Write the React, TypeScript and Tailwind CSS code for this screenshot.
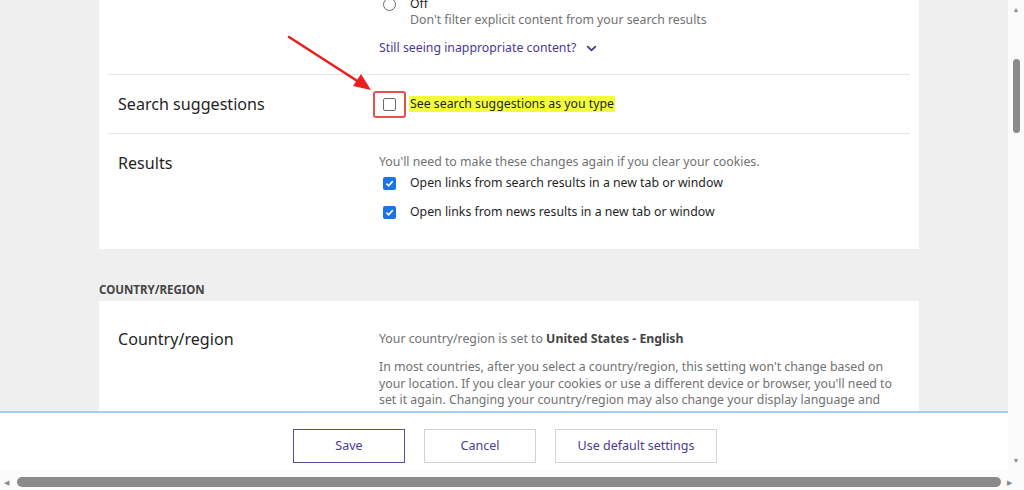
import { ChevronDown } from 'lucide-react';

const font = { fontFamily: '"Noto Sans", "Open Sans", Arial, sans-serif' };

const Check = ({ checked }: { checked: boolean }) =>
  checked ? (
    <span className="flex h-[13px] w-[13px] shrink-0 items-center justify-center rounded-[2px] bg-[#1a73e8]">
      <svg width="9" height="9" viewBox="0 0 10 10">
        <path d="M1.5 5.2 L4 7.6 L8.6 2.4" fill="none" stroke="#fff" strokeWidth="1.8" />
      </svg>
    </span>
  ) : (
    <span className="block h-[13px] w-[13px] shrink-0 rounded-[2px] border border-[#6b6b6b] bg-white" />
  );

const Row = ({ label, children, className }: { label?: string; children: React.ReactNode; className?: string }) => (
  <div className={'flex px-[10px] ' + (className ?? '')}>
    <div className="w-[261px] shrink-0 text-[16.1px] leading-[24px] text-[#1f1f1f]">{label}</div>
    <div className="flex-1">{children}</div>
  </div>
);

export default function App() {
  return (
    <div className="flex h-[490px] w-[1024px] flex-col overflow-hidden bg-white text-[12.3px]" style={font}>
      <div className="flex min-h-0 flex-1">
        <div className="flex min-w-0 flex-1 flex-col">
          {/* scrolled settings page */}
          <div className="relative min-h-0 flex-1 overflow-hidden bg-[#efefef]">
            <div className="-mt-[5px] pl-[99px]">
              <div className="w-[820px] bg-white px-[9px]">
                <Row className="pb-[18px]">
                  <div className="flex h-[18px] items-center">
                    <span className="ml-[4px] h-[13px] w-[13px] rounded-full border border-[#6b6b6b]" />
                    <span className="ml-[14px] text-[#1f1f1f]">Off</span>
                  </div>
                  <div className="-mt-[1px] pl-[31px] leading-[16px] text-[#717171]">
                    Don't filter explicit content from your search results
                  </div>
                  <div className="mt-[12px] flex items-center gap-[8px] leading-[16px] text-[#4c3a8e]">
                    Still seeing inappropriate content?
                    <ChevronDown size={15} strokeWidth={3} />
                  </div>
                </Row>
                <Row label="Search suggestions" className="h-[59px] items-center border-t border-[#e6e6e6]">
                  <div className="flex items-center">
                    <span className="relative ml-[4px]">
                      <Check checked={false} />
                      <span className="absolute -left-[10px] -top-[7px] h-[27px] w-[33px] rounded-[3px] border-2 border-[#e35050]" />
                    </span>
                    <span className="ml-[13px] bg-[#f4ff3c] px-[1px] leading-[16px] text-[#1f1f1f]">
                      See search suggestions as you type
                    </span>
                  </div>
                </Row>
                <Row label="Results" className="border-t border-[#e6e6e6] pb-[29px] pt-[17px]">
                  <div className="pt-[3px] leading-[16px] text-[#717171]">
                    You'll need to make these changes again if you clear your cookies.
                  </div>
                  <div className="mt-[5px] flex h-[16px] items-center">
                    <span className="ml-[4px]"><Check checked /></span>
                    <span className="ml-[14px] text-[#1f1f1f]">Open links from search results in a new tab or window</span>
                  </div>
                  <div className="mt-[13px] flex h-[16px] items-center">
                    <span className="ml-[4px]"><Check checked /></span>
                    <span className="ml-[14px] text-[#1f1f1f]">Open links from news results in a new tab or window</span>
                  </div>
                </Row>
              </div>

              <div className="pb-[3px] pt-[33px] text-[11.5px] font-bold leading-[16px] text-[#444]">COUNTRY/REGION</div>

              <div className="w-[820px] bg-white px-[9px] pt-[26px]">
                <Row label="Country/region">
                  <div className="leading-[24px] text-[#717171]">
                    Your country/region is set to <b className="font-bold text-[#444]">United States - English</b>
                  </div>
                  <p className="mt-[8px] leading-[16.5px] text-[#717171]">
                    In most countries, after you select a country/region, this setting won't change based on
                    your location. If you clear your cookies or use a different device or browser, you'll need to
                    set it again. Changing your country/region may also change your display language and
                    search results.
                  </p>
                </Row>
              </div>
            </div>

            {/* annotation arrow */}
            <svg className="absolute left-[286px] top-[34px]" width="90" height="62" viewBox="0 0 90 62">
              <path d="M3 3 L76 50" stroke="#e8201e" strokeWidth="2.6" strokeLinecap="round" />
              <path d="M85 56 L67 52 L75 40 Z" fill="#e8201e" />
            </svg>
          </div>

          <div className="flex h-[59px] shrink-0 items-start gap-[19px] border-t-2 border-[#a8cdee] bg-white pl-[293px] pt-[16px]">
            <button className="h-[34px] w-[112px] border border-[#5b4b98] text-[12.5px] text-[#4c3a8e]">Save</button>
            <button className="h-[34px] w-[112px] border border-[#d3d3d3] text-[12.5px] text-[#4c3a8e]">Cancel</button>
            <button className="h-[34px] w-[162px] border border-[#d3d3d3] text-[12.5px] text-[#4c3a8e]">Use default settings</button>
          </div>
        </div>

        {/* vertical scrollbar */}
        <div className="flex w-[16px] shrink-0 flex-col items-center bg-[#fbfbfb]">
          <span className="mt-[6px] text-[7px] leading-none text-[#8a8a8a]">▲</span>
          <div className="mt-[46px] h-[74px] w-[7px] rounded-full bg-[#8a8a8a]" />
          <div className="flex-1" />
          <span className="mb-[6px] text-[7px] leading-none text-[#8a8a8a]">▼</span>
        </div>
      </div>

      {/* horizontal scrollbar */}
      <div className="flex h-[20px] shrink-0 items-end bg-[#fbfbfb] px-[4px] pb-[3px]">
        <span className="pb-[1px] text-[7px] leading-none text-[#8a8a8a]">◀</span>
        <div className="ml-[8px] mr-[6px] h-[10px] flex-1 rounded-full bg-[#8a8a8a]" />
        <span className="pb-[1px] text-[7px] leading-none text-[#8a8a8a]">▶</span>
        <span className="w-[8px]" />
      </div>
    </div>
  );
}
